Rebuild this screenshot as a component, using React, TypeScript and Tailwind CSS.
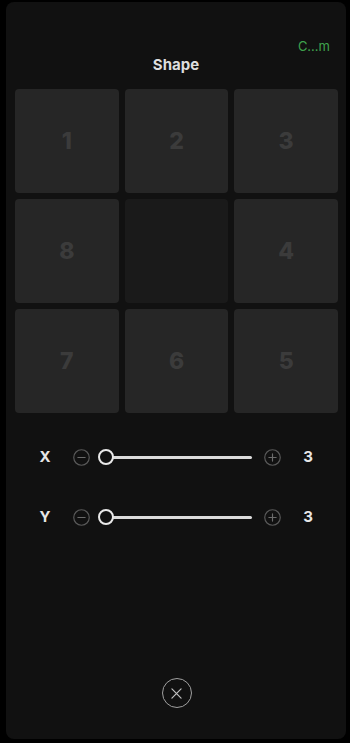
import { useState } from "react";

const tiles = ["1", "2", "3", "8", "", "4", "7", "6", "5"];

function RoundIcon({ kind }: { kind: "minus" | "plus" }) {
  return (
    <svg viewBox="0 0 16 16" className="h-[17px] w-[17px] shrink-0">
      <circle cx="8" cy="8" r="7.3" fill="none" stroke="#5a5a5a" strokeWidth="1.1" />
      <path d="M4.6 8h6.8" stroke="#6a6a6a" strokeWidth="1.1" strokeLinecap="round" />
      {kind === "plus" && (
        <path d="M8 4.6v6.8" stroke="#6a6a6a" strokeWidth="1.1" strokeLinecap="round" />
      )}
    </svg>
  );
}

function SliderRow({ label, value }: { label: string; value: number }) {
  return (
    <div className="flex h-[30px] items-center pl-[24px]">
      <span className="w-[30px] text-center text-[15px] font-bold text-[#e6e6e6]">{label}</span>
      <span className="ml-[13px]">
        <RoundIcon kind="minus" />
      </span>
      {/* track + thumb */}
      <div className="relative ml-[8px] flex h-[16px] w-[154px] items-center">
        <div className="ml-[8px] h-[3px] flex-1 rounded-full bg-[#dcdcdc]" />
        <div className="absolute left-0 top-0 h-[16px] w-[16px] rounded-full border-[2.5px] border-[#e8e8e8] bg-[#111111]" />
      </div>
      <span className="ml-[12px]">
        <RoundIcon kind="plus" />
      </span>
      <span className="ml-[17px] w-[20px] text-center text-[15px] font-bold text-[#e6e6e6]">{value}</span>
    </div>
  );
}

export default function App() {
  const [x] = useState(3);
  const [y] = useState(3);

  return (
    <div
      className="h-[743px] w-[350px] overflow-hidden bg-black pt-[2px]"
      style={{ fontFamily: "Inter, 'Liberation Sans', sans-serif" }}
    >
      <div className="ml-[6px] mr-[4px] flex h-[737px] flex-col rounded-[8px] bg-[#111111]">
        <div className="flex justify-end pr-[16px] pt-[35px]">
          <span className="text-[13px] leading-[18px] text-[#3fa34d]">C…m</span>
        </div>
        <h1 className="text-center text-[15px] font-bold leading-[20px] text-[#dedede]">Shape</h1>

        <div className="mt-[14px] grid grid-cols-3 gap-x-[6px] gap-y-[6px] pl-[9px] pr-[8px]">
          {tiles.map((t, i) => (
            <div
              key={i}
              className={
                t
                  ? "flex h-[104px] items-center justify-center rounded-[4px] bg-[#262626] text-[23px] font-extrabold text-[#3b3b3b]"
                  : "h-[104px] rounded-[4px] bg-[#1a1a1a]"
              }
            >
              {t}
            </div>
          ))}
        </div>

        <div className="mt-[29px]">
          <SliderRow label="X" value={x} />
        </div>
        <div className="mt-[30px]">
          <SliderRow label="Y" value={y} />
        </div>

        <div className="mt-auto mb-[31px] flex justify-center">
          <button
            type="button"
            className="ml-[1px] flex h-[30px] w-[30px] items-center justify-center rounded-full border-[1.5px] border-[#a0a0a0]"
          >
            <svg viewBox="0 0 12 12" className="h-[11px] w-[11px]">
              <path d="M1 1l10 10M11 1L1 11" stroke="#c0c0c0" strokeWidth="1.3" strokeLinecap="round" />
            </svg>
          </button>
        </div>
      </div>
    </div>
  );
}
